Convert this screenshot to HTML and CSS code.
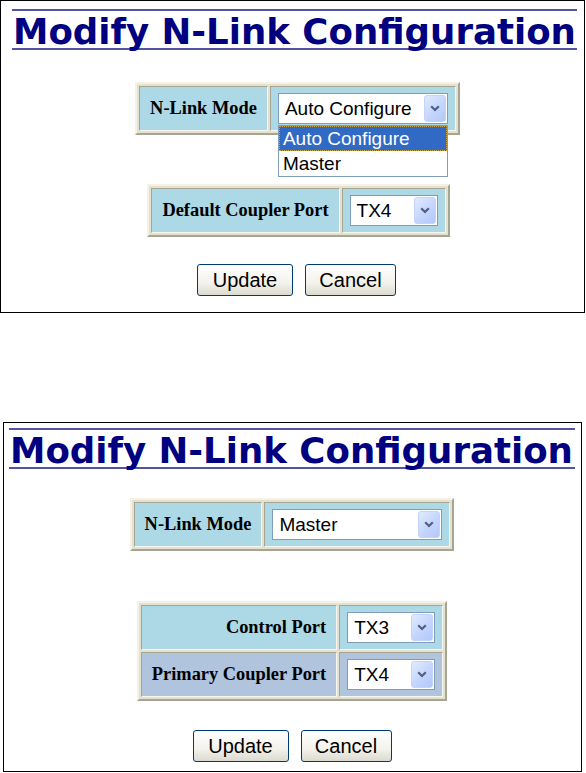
FILE: index.html
```html
<!DOCTYPE html>
<html>
<head>
<meta charset="utf-8">
<title>Modify N-Link Configuration</title>
<link rel="stylesheet" href="styles.css">
</head>
<body>
<div class="frame f1">
  <h1 class="title">Modify N-Link Configuration</h1>
  <table class="cfg t1">
    <tr>
      <td class="lbl">N-Link Mode</td>
      <td class="sel">
        <div class="select wide open">
          <span class="val">Auto Configure</span>
          <span class="arrow"><svg width="10" height="7" viewBox="0 0 10 7"><path d="M1.2 1.2 L5 5 L8.8 1.2" fill="none" stroke="#4d6185" stroke-width="2.2"/></svg></span>
          <div class="list">
            <div class="opt hl">Auto Configure</div>
            <div class="opt">Master</div>
          </div>
        </div>
      </td>
    </tr>
  </table>
  <table class="cfg t2">
    <tr>
      <td class="lbl">Default Coupler Port</td>
      <td class="sel">
        <div class="select narrow">
          <span class="val">TX4</span>
          <span class="arrow"><svg width="10" height="7" viewBox="0 0 10 7"><path d="M1.2 1.2 L5 5 L8.8 1.2" fill="none" stroke="#4d6185" stroke-width="2.2"/></svg></span>
        </div>
      </td>
    </tr>
  </table>
  <div class="buttons b1">
    <button class="btn upd">Update</button>
    <button class="btn can">Cancel</button>
  </div>
</div>

<div class="frame f2">
  <h1 class="title">Modify N-Link Configuration</h1>
  <table class="cfg t3">
    <tr>
      <td class="lbl">N-Link Mode</td>
      <td class="sel">
        <div class="select wide">
          <span class="val">Master</span>
          <span class="arrow"><svg width="10" height="7" viewBox="0 0 10 7"><path d="M1.2 1.2 L5 5 L8.8 1.2" fill="none" stroke="#4d6185" stroke-width="2.2"/></svg></span>
        </div>
      </td>
    </tr>
  </table>
  <table class="cfg t4">
    <tr>
      <td class="lbl right">Control Port</td>
      <td class="sel">
        <div class="select narrow">
          <span class="val">TX3</span>
          <span class="arrow"><svg width="10" height="7" viewBox="0 0 10 7"><path d="M1.2 1.2 L5 5 L8.8 1.2" fill="none" stroke="#4d6185" stroke-width="2.2"/></svg></span>
        </div>
      </td>
    </tr>
    <tr class="alt">
      <td class="lbl right">Primary Coupler Port</td>
      <td class="sel">
        <div class="select narrow">
          <span class="val">TX4</span>
          <span class="arrow"><svg width="10" height="7" viewBox="0 0 10 7"><path d="M1.2 1.2 L5 5 L8.8 1.2" fill="none" stroke="#4d6185" stroke-width="2.2"/></svg></span>
        </div>
      </td>
    </tr>
  </table>
  <div class="buttons b2">
    <button class="btn upd">Update</button>
    <button class="btn can">Cancel</button>
  </div>
</div>
</body>
</html>
```

FILE: styles.css
```css
html, body {
  margin: 0;
  padding: 0;
  background: #ffffff;
}

.frame {
  box-sizing: border-box;
  border: 1px solid #000000;
  display: flex;
  flex-direction: column;
  align-items: center;
}

.f1 {
  width: 585px;
  height: 313px;
  padding: 8px 7px 0 11px;
}

.f2 {
  width: 579px;
  height: 350px;
  margin: 109px 0 0 3px;
  padding: 5px 6px 0 5px;
}

.title {
  align-self: stretch;
  height: 33px;
  margin: 0;
  padding: 4px 0 0 1px;
  box-sizing: content-box;
  border-top: 2px solid #5252a6;
  border-bottom: 2px solid #5252a6;
  font-family: "DejaVu Sans", Verdana, sans-serif;
  font-weight: bold;
  font-size: 35.6px;
  line-height: 33px;
  color: #000080;
  white-space: nowrap;
}

.cfg {
  border-collapse: separate;
  border-spacing: 2px;
  border: 2px solid;
  border-color: #f4f2e6 #a6a493 #a6a493 #f4f2e6;
  background: #e4e1cf;
}

.cfg td {
  border: 1px solid;
  border-color: #a6a493 #f7f6ee #f7f6ee #a6a493;
  background: #add8e6;
}

.cfg tr.alt td {
  background: #b0c4de;
}

.lbl {
  padding: 0 10px;
  font-family: "Liberation Serif", "Times New Roman", serif;
  font-weight: bold;
  font-size: 18.4px;
  color: #000000;
  white-space: nowrap;
  text-align: left;
}

.lbl.right {
  text-align: right;
}

.sel {
  padding: 6px 7px;
}

.t1 { margin-top: 32px; margin-left: 6px; }
.t2 { margin-top: 49px; margin-left: 8px; }
.t3 { margin-top: 29px; }
.t4 { margin-top: 50px; }

.select {
  position: relative;
  box-sizing: border-box;
  height: 31px;
  border: 1px solid #7f9db9;
  background: #ffffff;
  font-family: "Liberation Sans", Arial, sans-serif;
  font-size: 19px;
  color: #000000;
  display: flex;
  align-items: center;
}

.select.wide { width: 170px; }
.select.narrow { width: 88px; }

.val {
  flex: 1;
  padding-left: 6px;
  white-space: nowrap;
}

.arrow {
  box-sizing: border-box;
  width: 22px;
  height: 27px;
  margin-right: 1px;
  border: 1px solid #c3d3fb;
  border-radius: 3px;
  background: linear-gradient(135deg, #e2ebfe, #c4d5fd 55%, #b3c8f9);
  display: flex;
  align-items: center;
  justify-content: center;
}

.list {
  position: absolute;
  left: -1px;
  top: 31px;
  width: 170px;
  box-sizing: border-box;
  border: 1px solid #7f9db9;
  background: #ffffff;
  z-index: 2;
}

.opt {
  height: 25px;
  line-height: 25px;
  padding-left: 4px;
  white-space: nowrap;
  box-sizing: border-box;
}

.opt.hl {
  background: #316ac5;
  color: #ffffff;
  border: 1px dotted #c9a44a;
  line-height: 23px;
  padding-left: 3px;
}

.buttons {
  display: flex;
  gap: 12px;
}

.b1 { margin-top: 27px; margin-left: 4px; }
.b2 { margin-top: 29px; }

.btn {
  box-sizing: border-box;
  height: 32px;
  padding: 0;
  border: 1px solid #003c74;
  border-radius: 3px;
  background: linear-gradient(#ffffff, #f3f2ec 60%, #dcdad0);
  font-family: "Liberation Sans", Arial, sans-serif;
  font-size: 20px;
  color: #000000;
}

.btn.upd { width: 96px; }
.btn.can { width: 91px; }
```
